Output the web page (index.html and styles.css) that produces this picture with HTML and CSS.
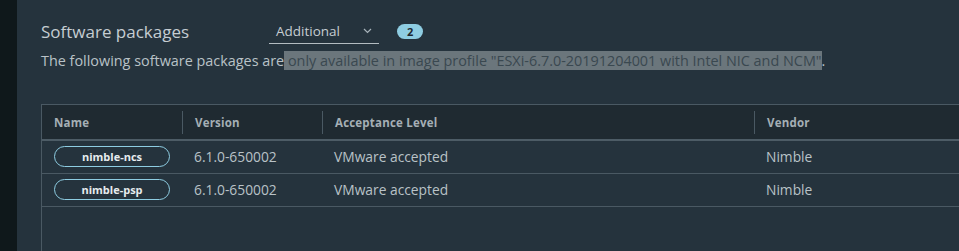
FILE: index.html
```html
<!DOCTYPE html>
<html lang="en">
<head>
  <meta charset="UTF-8">
  <title>Software packages</title>
  <link rel="stylesheet" href="styles.css">
</head>
<body>
  <div class="sidebar"></div>

  <div class="content">
    <div class="section-header">
      <h2>Software packages</h2>
      <div class="select">
        <span>Additional</span>
        <svg width="9" height="6" viewBox="0 0 9 6"><path d="M1 1 L4.5 4.5 L8 1" fill="none" stroke="#a7b3ba" stroke-width="1.2"/></svg>
      </div>
      <span class="badge">2</span>
    </div>

    <p class="description">The following software packages are<mark> only available in image profile "ESXi-6.7.0-20191204001 with Intel NIC and NCM"</mark>.</p>

    <div class="datagrid">
      <div class="row head">
        <div class="cell">Name</div>
        <div class="cell">Version</div>
        <div class="cell">Acceptance Level</div>
        <div class="cell">Vendor</div>
      </div>
      <div class="row">
        <div class="cell"><span class="pill">nimble-ncs</span></div>
        <div class="cell">6.1.0-650002</div>
        <div class="cell">VMware accepted</div>
        <div class="cell">Nimble</div>
      </div>
      <div class="row">
        <div class="cell"><span class="pill">nimble-psp</span></div>
        <div class="cell">6.1.0-650002</div>
        <div class="cell">VMware accepted</div>
        <div class="cell">Nimble</div>
      </div>
    </div>
  </div>
</body>
</html>
```

FILE: styles.css
```css
* {
  box-sizing: border-box;
  margin: 0;
  padding: 0;
}

body {
  font-family: 'Open Sans', sans-serif;
  background-color: #25333d;
  color: #b9c2c7;
  display: flex;
  height: 100vh;
  overflow: hidden;
}

.sidebar {
  width: 17px;
  flex-shrink: 0;
  background-color: #0f181b;
}

.content {
  flex: 1;
  display: flex;
  flex-direction: column;
  padding: 18px 0 0 24px;
  min-width: 0;
}

/* Title, dropdown and count */
.section-header {
  display: flex;
  align-items: center;
  height: 26px;
}

.section-header h2 {
  font-size: 17px;
  font-weight: 400;
  color: #c5cdd2;
  width: 228px;
}

.select {
  display: flex;
  align-items: center;
  justify-content: space-between;
  width: 110px;
  height: 26px;
  padding: 0 7px 0 7px;
  border-bottom: 1px solid #b3bcc1;
  font-size: 13.5px;
  color: #c5cdd2;
}

.badge {
  margin-left: 18px;
  background-color: #8ecde2;
  color: #1c2830;
  font-size: 11px;
  font-weight: 700;
  border-radius: 8px;
  padding: 0 10px;
  line-height: 15px;
}

.description {
  margin-top: 5px;
  font-size: 14.4px;
  line-height: 24px;
  color: #b9c2c7;
}

.description mark {
  background-color: #6b767c;
  color: #3a4850;
}

/* Table */
.datagrid {
  flex: 1;
  margin-top: 31px;
  border: 1px solid #4a5963;
  border-right: none;
  border-bottom: none;
}

.row {
  display: grid;
  grid-template-columns: 140px 140px 432px 1fr;
  height: 33px;
  padding-bottom: 2px;
  align-items: center;
  border-bottom: 1px solid #4a5963;
}

.row.head {
  height: 36px;
  padding-bottom: 0;
  background-color: #1f2a31;
  border-bottom: 2px solid #4d5c66;
  font-weight: 700;
  color: #a5afb5;
}

.cell {
  padding-left: 12px;
  font-size: 13.8px;
}

.row.head .cell {
  font-size: 11.5px;
  letter-spacing: 0.2px;
  border-left: 1px solid #4a5963;
  line-height: 23px;
}

.row.head .cell:first-child {
  border-left: none;
}

.pill {
  display: inline-block;
  width: 116px;
  height: 21px;
  line-height: 19px;
  border: 1px solid #8ecde2;
  border-radius: 11px;
  text-align: center;
  font-size: 11px;
  font-weight: 700;
  color: #e6ebee;
}
```
